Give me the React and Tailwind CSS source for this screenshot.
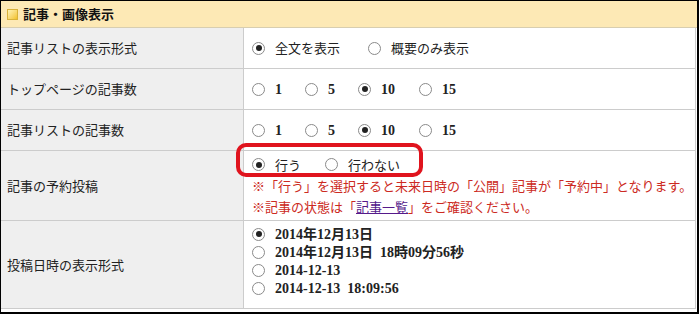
const jp = { fontFamily: '"Noto Sans CJK JP", "Noto Sans", sans-serif' };
const serif = { fontFamily: '"Liberation Serif", "Noto Sans CJK JP", serif' };

const Radio = ({ checked }) => (
  <span className="inline-flex w-[13px] h-[13px] shrink-0 items-center justify-center rounded-full border border-[#8a8a8a] bg-white">
    {checked && <span className="w-[6px] h-[6px] rounded-full bg-[#222]" />}
  </span>
);

const Opt = ({ checked, children, num, className = "" }) => (
  <span className={`inline-flex items-center ${className}`}>
    <Radio checked={checked} />
    <span
      className={`ml-[10px] text-[#222] whitespace-pre ${num ? "text-[14px] font-bold" : "text-[13px]"}`}
      style={num ? serif : jp}
    >
      {children}
    </span>
  </span>
);

const Row = ({ label, height, children, align = "items-center" }) => (
  <div className={`flex border-b border-[#cccccc] ${height}`}>
    <div
      className="w-[243px] shrink-0 flex items-center pl-[6px] bg-[#efefef] border-r border-[#cccccc] text-[13px] text-[#222]"
      style={jp}
    >
      {label}
    </div>
    <div className={`flex-1 flex pl-[8px] ${align}`}>{children}</div>
  </div>
);

export default function App() {
  return (
    <div className="w-[699px] h-[314px] bg-white border-l border-t border-r-2 border-b-2 border-black overflow-hidden">
      <div className="h-[27px] flex items-center bg-[#fde9b5] border-b border-[#d8ceb0] pl-[6px]">
        <span className="w-[11px] h-[11px] border border-[#d9b23a] bg-gradient-to-br from-[#fff3b0] to-[#f3c21c]" />
        <span className="ml-[5px] text-[13px] font-bold text-[#111]" style={jp}>
          記事・画像表示
        </span>
      </div>
      <div className="mr-[1px] border-r border-[#cccccc]">
        <Row label="記事リストの表示形式" height="h-[41px]">
          <Opt checked>全文を表示</Opt>
          <Opt className="ml-[28px]">概要のみ表示</Opt>
        </Row>
        <Row label="トップページの記事数" height="h-[41px]">
          <Opt num>1</Opt>
          <Opt num className="ml-[23px]">5</Opt>
          <Opt num checked className="ml-[23px]">10</Opt>
          <Opt num className="ml-[24px]">15</Opt>
        </Row>
        <Row label="記事リストの記事数" height="h-[41px]">
          <Opt num>1</Opt>
          <Opt num className="ml-[23px]">5</Opt>
          <Opt num checked className="ml-[23px]">10</Opt>
          <Opt num className="ml-[24px]">15</Opt>
        </Row>
        <Row label="記事の予約投稿" height="h-[70px]" align="items-start">
          <div className="relative pt-[3px]">
            <div className="h-[21px] flex items-center">
              <Opt checked>行う</Opt>
              <Opt className="ml-[24px]">行わない</Opt>
            </div>
            <div className="text-[13px] leading-[21px] text-[#cc2a22]" style={jp}>
              ※「行う」を選択すると未来日時の「公開」記事が「予約中」となります。
            </div>
            <div className="text-[13px] leading-[21px] text-[#cc2a22]" style={jp}>
              ※記事の状態は「<span className="text-[#551a8b] underline">記事一覧</span>」をご確認ください。
            </div>
            <div className="absolute left-[-16px] top-[-8px] w-[187px] h-[34px] rounded-[10px] border-[4px] border-[#e0141e]" />
          </div>
        </Row>
        <Row label="投稿日時の表示形式" height="h-[88px]" align="items-start">
          <div className="pt-[4px] flex flex-col">
            <div className="h-[18px] flex items-center"><Opt num checked>2014年12月13日</Opt></div>
            <div className="h-[18px] flex items-center"><Opt num>{"2014年12月13日  18時09分56秒"}</Opt></div>
            <div className="h-[18px] flex items-center"><Opt num>2014-12-13</Opt></div>
            <div className="h-[18px] flex items-center"><Opt num>{"2014-12-13  18:09:56"}</Opt></div>
          </div>
        </Row>
      </div>
    </div>
  );
}
